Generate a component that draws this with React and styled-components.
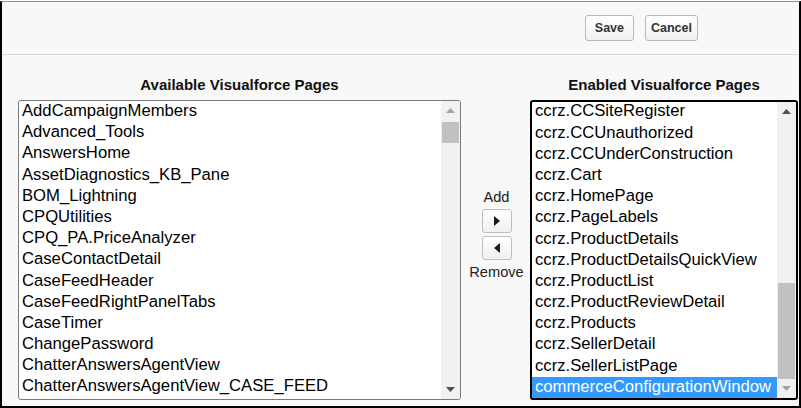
import React from "react";
import styled, { createGlobalStyle } from "styled-components";

const Global = createGlobalStyle`
  html, body { margin: 0; padding: 0; background: #ffffff; }
  body { font-family: "Liberation Sans", Arial, sans-serif; }
  * { box-sizing: border-box; }
`;

const Frame = styled.div`
  margin-top: 1px;
  width: 801px;
  height: 407px;
  border-top: 1px solid #8c909a;
  border-left: 2px solid #000;
  border-right: 2px solid #000;
  border-bottom: 2px solid #000;
  background: #f8f8f8;
  display: flex;
  flex-direction: column;
`;

const Header = styled.div`
  height: 53px;
  border-bottom: 1px solid #d9d9d9;
  display: flex;
  align-items: center;
  justify-content: flex-end;
  gap: 11px;
  padding-right: 101px;
`;

const Button = styled.button`
  height: 26px;
  padding: 0 ${(p) => p.$pad}px;
  border: 1px solid #b8b8b8;
  border-radius: 3px;
  background: linear-gradient(#ffffff, #f1f1f1);
  color: #333;
  font-family: "Liberation Sans", Arial, sans-serif;
  font-weight: bold;
  font-size: 12.5px;
  cursor: pointer;
`;

const Body = styled.div`
  flex: 1;
  display: grid;
  grid-template-columns: 443px 69px 268px;
  grid-template-rows: 18px 300px;
  row-gap: 6px;
  padding: 21px 0 6px 16px;
`;

const Heading = styled.div`
  font-weight: bold;
  font-size: 15px;
  line-height: 18px;
  color: #111;
  text-align: center;
`;

const ListBox = styled.div`
  display: flex;
  background: #fff;
  border: ${(p) => (p.$focused ? "2px solid #000" : "1px solid #7a7a7a")};
  border-radius: 3px;
  overflow: hidden;
`;

const Items = styled.div`
  flex: 1;
  display: flex;
  flex-direction: column;
  justify-content: ${(p) => (p.$bottom ? "flex-end" : "flex-start")};
  overflow: hidden;
  min-width: 0;
`;

const Item = styled.div`
  flex: none;
  height: 21.2px;
  line-height: 20px;
  padding: 0 3px;
  font-size: 16.67px;
  white-space: nowrap;
  color: ${(p) => (p.$selected ? "#fff" : "#000")};
  background: ${(p) => (p.$selected ? "#3399ff" : "transparent")};
`;

const Scrollbar = styled.div`
  width: 19px;
  flex: none;
  background: #f1f1f1;
  display: flex;
  flex-direction: column;
`;

const ScrollButton = styled.div`
  height: 19px;
  flex: none;
  display: flex;
  align-items: center;
  justify-content: center;
`;

const Track = styled.div`
  flex: 1;
  position: relative;
`;

const Thumb = styled.div`
  position: absolute;
  left: 1px;
  right: 1px;
  background: #c1c1c1;
`;

const Middle = styled.div`
  display: flex;
  flex-direction: column;
  align-items: center;
  padding-top: 89px;
  padding-left: 2px;
`;

const MoveLabel = styled.div`
  font-size: 14.6px;
  line-height: 16px;
  color: #222;
  margin: ${(p) => p.$margin};
`;

const MoveButton = styled.button`
  width: 30px;
  height: 24px;
  margin-bottom: ${(p) => p.$mb || 0}px;
  border: 1px solid #bdbdbd;
  border-radius: 3px;
  background: linear-gradient(#ffffff, #f0f0f0);
  display: flex;
  align-items: center;
  justify-content: center;
  padding: 0;
`;

const Arrow = ({ dir, color }) => (
  <svg width="9" height="5" viewBox="0 0 9 5">
    {dir === "up" ? (
      <polygon points="0,5 9,5 4.5,0" fill={color} />
    ) : (
      <polygon points="0,0 9,0 4.5,5" fill={color} />
    )}
  </svg>
);

const Tri = ({ dir }) => (
  <svg width="6" height="10" viewBox="0 0 6 10">
    {dir === "right" ? (
      <polygon points="0,0 6,5 0,10" fill="#1a1a1a" />
    ) : (
      <polygon points="6,0 0,5 6,10" fill="#1a1a1a" />
    )}
  </svg>
);

const ScrollBarView = ({ thumbTop, thumbH, upOn, downOn }) => (
  <Scrollbar>
    <ScrollButton>
      <Arrow dir="up" color={upOn ? "#505050" : "#a3a3a3"} />
    </ScrollButton>
    <Track>
      <Thumb style={{ top: thumbTop, height: thumbH }} />
    </Track>
    <ScrollButton>
      <Arrow dir="down" color={downOn ? "#505050" : "#a3a3a3"} />
    </ScrollButton>
  </Scrollbar>
);

const available = [
  "AddCampaignMembers",
  "Advanced_Tools",
  "AnswersHome",
  "AssetDiagnostics_KB_Pane",
  "BOM_Lightning",
  "CPQUtilities",
  "CPQ_PA.PriceAnalyzer",
  "CaseContactDetail",
  "CaseFeedHeader",
  "CaseFeedRightPanelTabs",
  "CaseTimer",
  "ChangePassword",
  "ChatterAnswersAgentView",
  "ChatterAnswersAgentView_CASE_FEED",
];

const enabled = [
  "ccrz.CCSiteRegister",
  "ccrz.CCUnauthorized",
  "ccrz.CCUnderConstruction",
  "ccrz.Cart",
  "ccrz.HomePage",
  "ccrz.PageLabels",
  "ccrz.ProductDetails",
  "ccrz.ProductDetailsQuickView",
  "ccrz.ProductList",
  "ccrz.ProductReviewDetail",
  "ccrz.Products",
  "ccrz.SellerDetail",
  "ccrz.SellerListPage",
  "commerceConfigurationWindow",
];

export default function App() {
  const rightTrack = 258;
  const rightThumb = 96;
  return (
    <>
      <Global />
      <Frame>
        <Header>
          <Button $pad={9}>Save</Button>
          <Button $pad={5}>Cancel</Button>
        </Header>
        <Body>
          <Heading>Available Visualforce Pages</Heading>
          <div />
          <Heading>Enabled Visualforce Pages</Heading>
          <ListBox>
            <Items>
              {available.map((n) => (
                <Item key={n}>{n}</Item>
              ))}
            </Items>
            <ScrollBarView thumbTop={2} thumbH={21} upOn={false} downOn />
          </ListBox>
          <Middle>
            <MoveLabel $margin="0 0 4px 0">Add</MoveLabel>
            <MoveButton $mb={3}>
              <Tri dir="right" />
            </MoveButton>
            <MoveButton>
              <Tri dir="left" />
            </MoveButton>
            <MoveLabel $margin="4px 0 0 0">Remove</MoveLabel>
          </Middle>
          <ListBox $focused>
            <Items $bottom>
              {enabled.map((n, i) => (
                <Item key={n} $selected={i === enabled.length - 1}>
                  {n}
                </Item>
              ))}
            </Items>
            <ScrollBarView
              thumbTop={rightTrack - rightThumb}
              thumbH={rightThumb}
              upOn
              downOn={false}
            />
          </ListBox>
        </Body>
      </Frame>
    </>
  );
}
